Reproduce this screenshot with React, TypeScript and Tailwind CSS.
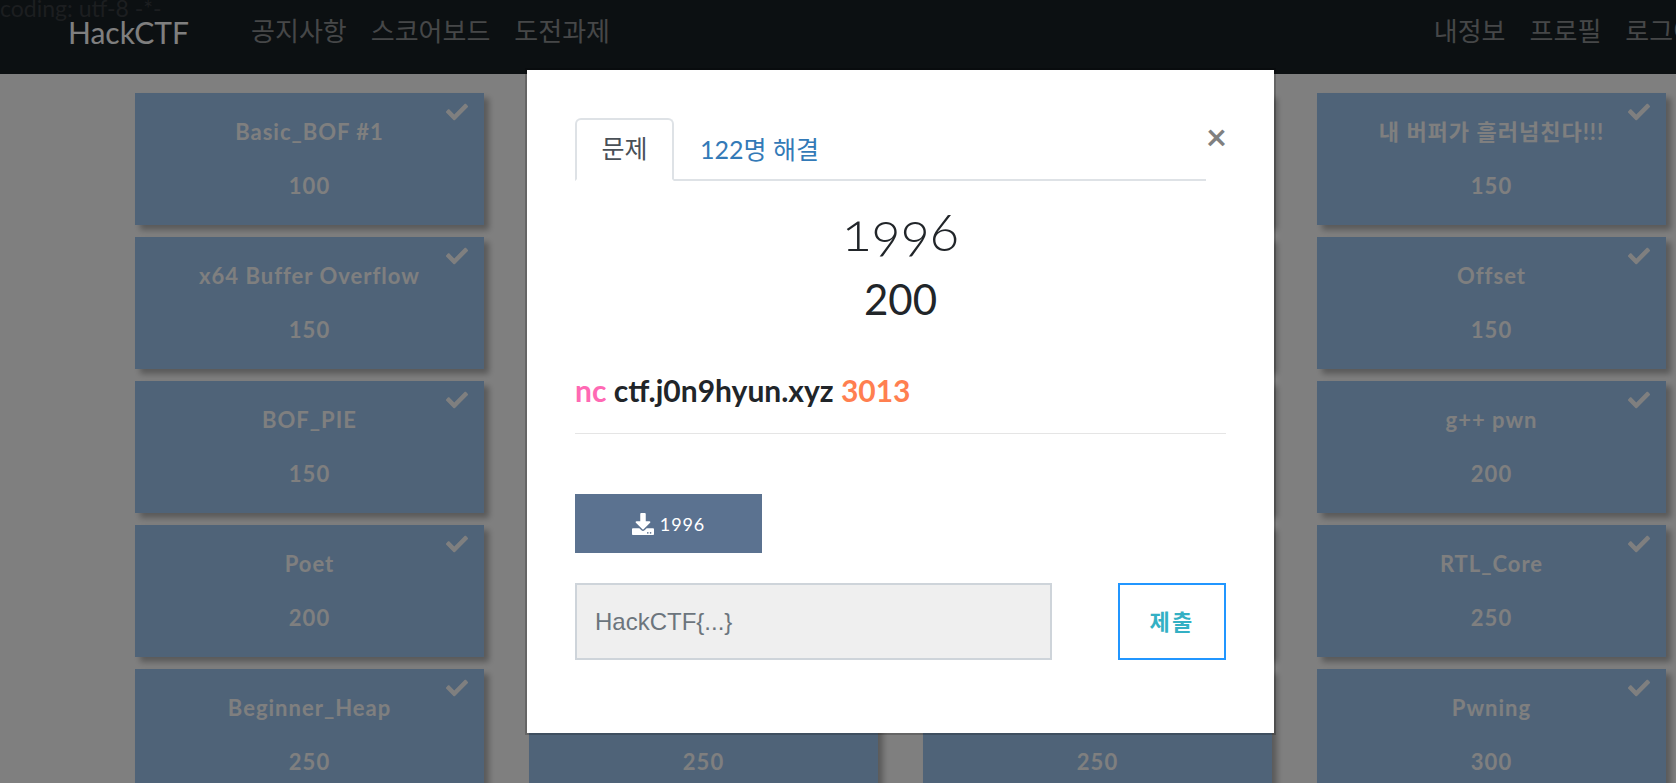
import React from "react";
import { FaCheck, FaDownload } from "react-icons/fa";

type Challenge = { name: string; points: number };

const challenges: Challenge[] = [
  { name: "Basic_BOF #1", points: 100 },
  { name: "Basic_BOF #2", points: 100 },
  { name: "Basic_FSB", points: 100 },
  { name: "내 버퍼가 흘러넘친다!!!", points: 150 },
  { name: "x64 Buffer Overflow", points: 150 },
  { name: "x64 Simple_size_BOF", points: 150 },
  { name: "Simple_Overflow_ver_2", points: 150 },
  { name: "Offset", points: 150 },
  { name: "BOF_PIE", points: 150 },
  { name: "Yes or no", points: 150 },
  { name: "RTL_World", points: 150 },
  { name: "g++ pwn", points: 200 },
  { name: "Poet", points: 200 },
  { name: "1996", points: 200 },
  { name: "Random Key", points: 200 },
  { name: "RTL_Core", points: 250 },
  { name: "Beginner_Heap", points: 250 },
  { name: "Look at me", points: 250 },
  { name: "Gift", points: 250 },
  { name: "Pwning", points: 300 },
];

function NavLinks({ items }: { items: string[] }) {
  return (
    <ul className="flex gap-6">
      {items.map((item) => (
        <li key={item}>
          <a href="#" className="text-[26px] leading-9 text-[#8c8f91]">
            {item}
          </a>
        </li>
      ))}
    </ul>
  );
}

function Navbar() {
  return (
    <header className="relative flex h-[74px] items-start bg-[#182024] pl-[68px] pr-20 pt-[13px]">
      <span className="absolute left-0 -top-2 text-[23px] leading-8 text-[#383d41]">coding: utf-8 -*-</span>
      <a href="#" className="mr-[62px] text-3xl leading-[38px] text-white">
        HackCTF
      </a>
      <nav className="flex grow justify-between">
        <NavLinks items={["공지사항", "스코어보드", "도전과제"]} />
        <NavLinks items={["내정보", "프로필", "로그아웃"]} />
      </nav>
    </header>
  );
}

function ChallengeCard({ name, points }: Challenge) {
  return (
    <button
      type="button"
      className="relative flex h-[132px] flex-col items-center gap-6 bg-[#9ec6f0] pt-6 text-[22px] font-bold leading-[30px] tracking-[1px] text-white shadow-[5px_5px_6px_rgba(0,0,0,0.3)]"
    >
      <FaCheck className="absolute right-4 top-2 size-[22px]" />
      <span>{name}</span>
      <span>{points}</span>
    </button>
  );
}

function ChallengeModal() {
  return (
    <div
      role="dialog"
      aria-label="1996"
      className="w-[751px] border-2 border-black/20 bg-white bg-clip-padding p-12 pb-[73px] text-[#212529]"
    >
      <div className="flex items-start">
        <div role="tablist" className="flex grow border-b-2 border-[#dee2e6]">
          <button
            type="button"
            role="tab"
            aria-selected="true"
            className="-mb-0.5 h-[63px] w-[99px] rounded-t-md border-2 border-[#dee2e6] border-b-white pb-1 text-[25px] leading-9 text-[#495057]"
          >
            문제
          </button>
          <button type="button" role="tab" aria-selected="false" className="px-[26px] text-[25px] leading-9 text-[#337ab7]">
            122명 해결
          </button>
        </div>
        <button type="button" aria-label="닫기" className="w-5 text-4xl font-bold leading-9 text-[#808080]">
          ×
        </button>
      </div>

      <h2 className="mt-5 text-center text-[54px] font-light oldstyle-nums leading-[60px]">1996</h2>
      <h3 className="mt-2 text-center text-[42px] leading-[60px]">200</h3>

      <p className="mt-[38px] border-b border-[#e5e5e5] pb-5 text-3xl font-bold leading-[46px]">
        <span className="text-[#ff69b4]">nc</span> ctf.j0n9hyun.xyz <span className="text-[#ff7f50]">3013</span>
      </p>

      <a
        href="#"
        className="mt-[60px] flex h-[59px] w-[187px] items-center justify-center gap-1.5 bg-[#5b7290] text-lg tracking-wider text-white"
      >
        <FaDownload className="size-[22px]" />
        1996
      </a>

      <form className="mt-[30px] flex h-[77px] justify-between">
        <input
          type="text"
          aria-label="HackCTF{...}"
          placeholder="HackCTF{...}"
          className="w-[477px] border-2 border-[#ced4da] bg-[#efefef] px-[18px] font-['Liberation_Sans',sans-serif] text-2xl placeholder:text-[#6c757d]"
        />
        <button type="button" className="w-[108px] border-2 border-[#2196ff] text-[22px] font-bold tracking-widest text-[#33b0c4]">
          제출
        </button>
      </form>
    </div>
  );
}

export default function App() {
  return (
    <div className="relative h-screen overflow-hidden font-['Lato','Noto_Sans_CJK_KR',sans-serif]">
      <div className="min-w-[1801px]">
        <Navbar />
        <main className="grid grid-cols-4 gap-x-[45px] gap-y-3 bg-white px-[135px] pt-[19px]">
          {challenges.map((c) => (
            <ChallengeCard key={c.name} name={c.name} points={c.points} />
          ))}
        </main>
      </div>
      <div className="absolute inset-y-0 left-0 flex w-full min-w-[1801px] items-start justify-center bg-black/50 pt-[68px]">
        <ChallengeModal />
      </div>
    </div>
  );
}
